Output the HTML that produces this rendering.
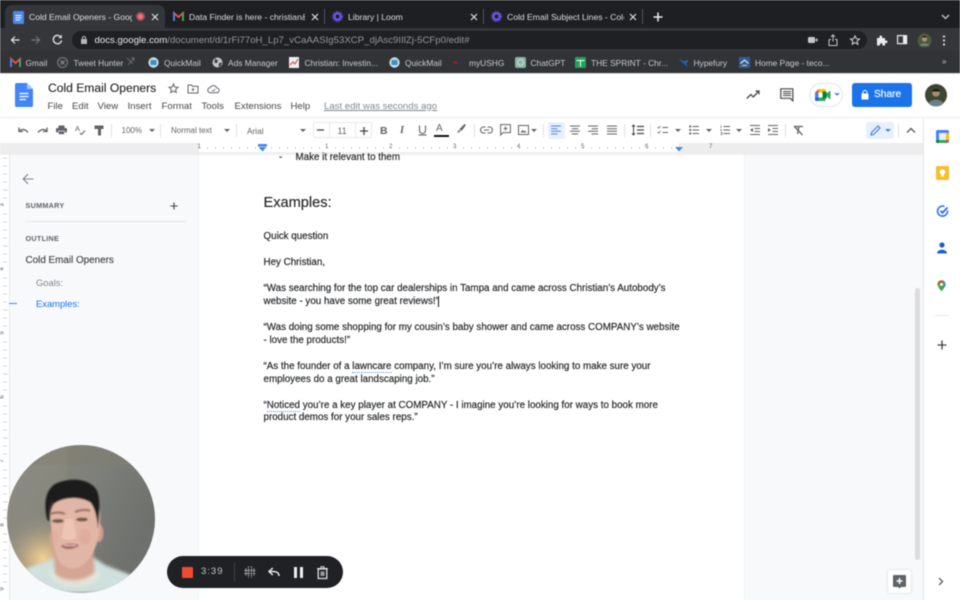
<!DOCTYPE html>
<html><head><meta charset="utf-8"><style>
html,body{margin:0;padding:0;background:#f8f9fa}
#r{position:relative;width:960px;height:600px;overflow:hidden;background:#f8f9fa;font-family:"Liberation Sans",sans-serif;filter:blur(.4px)}
#r div,#r span.t{position:absolute}
.t{white-space:nowrap;line-height:14px;height:14px;position:absolute}
svg{position:absolute;overflow:visible}
.tab{color:#dcdde0;font-size:8.6px}
.bm{color:#c9cacc;font-size:8.4px;top:55.5px}
.mn{color:#444746;font-size:9.6px;top:99.5px}
.tb{color:#5f6368;font-size:8px;top:123.5px}
.d{color:#1c1e21;font-size:9.8px;left:263.5px;-webkit-text-stroke:.15px #1c1e21}
.rn{color:#666;font-size:6px;top:141px;line-height:12px;height:12px}
.v{color:#555;font-size:6px;left:1px;line-height:8px;height:8px;transform:rotate(-90deg)}
</style></head><body><div id="r">

<div style="left:0;top:0;width:960px;height:28px;background:#1e1f22"></div>
<div style="left:5px;top:5px;width:160px;height:23px;background:#35363a;border-radius:7px 7px 0 0"></div>
<div style="left:0;top:28px;width:960px;height:23px;background:#35363a"></div>
<div style="left:0;top:51px;width:960px;height:22px;background:#323337"></div>
<div style="left:0;top:73px;width:960px;height:1px;background:#ddd"></div>

<svg style="left:13px;top:11px" width="12" height="13"><rect width="11" height="13" rx="1.5" fill="#4f86ec"/><path d="M2.5 4.5h6M2.5 6.8h6M2.5 9h4.5" stroke="#fff" stroke-width="1"/></svg>
<span class="t tab" style="left:29px;top:9.5px;width:103px;overflow:hidden">Cold Email Openers - Goog</span>
<svg style="left:135px;top:11px" width="12" height="12"><circle cx="5.500" cy="5.500" r="4.500" fill="#e8656a" opacity=".6"/><circle cx="5.500" cy="5.500" r="2.600" fill="#ee7276"/></svg>
<svg style="left:151px;top:13px" width="9" height="9"><path d="M1 1l6 6M7 1l-6 6" stroke="#dfe0e2" stroke-width="1.200"/></svg>

<svg style="left:173px;top:12px" width="11" height="9"><path d="M1 9V1l4.500 4L10 1v8" fill="none" stroke="#e8544a" stroke-width="1.800"/><path d="M1 9V1" stroke="#4a86e8" stroke-width="1.800"/><path d="M10 9V1" stroke="#3fa85f" stroke-width="1.800"/></svg>
<span class="t tab" style="left:189px;top:9.5px;width:116px;overflow:hidden">Data Finder is here - christian&amp;</span>
<svg style="left:311px;top:13px" width="9" height="9"><path d="M1 1l6 6M7 1l-6 6" stroke="#dfe0e2" stroke-width="1.200"/></svg>
<div style="left:324px;top:9px;width:1px;height:15px;background:#55565a"></div>

<svg style="left:332px;top:11px" width="12" height="12"><circle cx="5.500" cy="5.500" r="3.200" fill="none" stroke="#6a55e8" stroke-width="2.400"/><circle cx="5.500" cy="5.500" r="5" fill="none" stroke="#5a45d8" stroke-width="1.200" stroke-dasharray="1.500 1.200"/></svg>
<span class="t tab" style="left:348px;top:9.5px">Library | Loom</span>
<svg style="left:470px;top:13px" width="9" height="9"><path d="M1 1l6 6M7 1l-6 6" stroke="#dfe0e2" stroke-width="1.200"/></svg>
<div style="left:483px;top:9px;width:1px;height:15px;background:#55565a"></div>

<svg style="left:491px;top:11px" width="12" height="12"><circle cx="5.500" cy="5.500" r="3.200" fill="none" stroke="#6a55e8" stroke-width="2.400"/><circle cx="5.500" cy="5.500" r="5" fill="none" stroke="#5a45d8" stroke-width="1.200" stroke-dasharray="1.500 1.200"/></svg>
<span class="t tab" style="left:507px;top:9.5px;width:117px;overflow:hidden">Cold Email Subject Lines - Cole</span>
<svg style="left:629px;top:13px" width="9" height="9"><path d="M1 1l6 6M7 1l-6 6" stroke="#dfe0e2" stroke-width="1.200"/></svg>
<div style="left:642px;top:9px;width:1px;height:15px;background:#55565a"></div>
<svg style="left:653px;top:12px" width="10" height="10"><path d="M5 .5v9M.5 5h9" stroke="#eee" stroke-width="1.500"/></svg>
<svg style="left:941px;top:14px" width="9" height="6"><path d="M1 1l3.500 3.500L8 1" fill="none" stroke="#c8c9cb" stroke-width="1.300"/></svg>

<svg style="left:10px;top:35px" width="10" height="10"><path d="M9.500 5H1.500M5 1.500L1.500 5 5 8.500" fill="none" stroke="#e4e5e7" stroke-width="1.200"/></svg>
<svg style="left:31px;top:35px" width="10" height="10"><path d="M.5 5h8M5 1.500L8.500 5 5 8.500" fill="none" stroke="#77787b" stroke-width="1.200"/></svg>
<svg style="left:52px;top:34px" width="11" height="11"><path d="M9 3.200A4.200 4.200 0 1 0 9.600 6.500" fill="none" stroke="#e4e5e7" stroke-width="1.300"/><path d="M9.800 .8v3.400H6.400z" fill="#e4e5e7"/></svg>
<div style="left:72px;top:31px;width:795px;height:18px;border-radius:9px;background:#1f2023"></div>
<svg style="left:81px;top:36px" width="7" height="8"><rect x="0" y="3" width="6" height="5" rx=".5" fill="#b5b6b8"/><path d="M1.500 3.500V2a1.500 1.500 0 0 1 3 0v1.500" fill="none" stroke="#b5b6b8"/></svg>
<span class="t" style="left:94.500px;top:33.500px;font-size:9.650px;color:#e8e9eb">docs.google.com<span style="color:#96979a">/document/d/1rFi77oH_Lp7_vCaAASIg53XCP_djAsc9IIlZj-5CFp0/edit#</span></span>
<svg style="left:808px;top:36px" width="10" height="8"><rect y="1" width="7" height="6" rx="1" fill="#c5c6c8"/><path d="M7 4l2.500-2v4z" fill="#c5c6c8"/></svg>
<svg style="left:828px;top:34px" width="10" height="12"><path d="M1 5.500h2M7 5.500h2v6H1v-6" fill="none" stroke="#c5c6c8"/><path d="M5 7.500V1M3 2.800L5 .8l2 2" fill="none" stroke="#c5c6c8"/></svg>
<svg style="left:850px;top:35px" width="10" height="10"><path d="M5 .8l1.300 2.900 3.200.3-2.400 2.100.7 3.100L5 7.600 2.200 9.200l.7-3.100L.5 4l3.200-.3z" fill="none" stroke="#d5d6d8"/></svg>
<svg style="left:876px;top:35px" width="11" height="11"><path d="M1 3h2.500V1.800a1.300 1.300 0 0 1 2.600 0V3H9v2.500h1.200a1.300 1.300 0 0 1 0 2.600H9V10.500H6.500V9.500a1.300 1.300 0 0 0-2.600 0v1H1z" fill="#ececee"/></svg>
<svg style="left:897px;top:35px" width="11" height="10"><rect x=".6" y=".6" width="9" height="8" fill="none" stroke="#ececee" stroke-width="1.200"/><rect x="6" y="1" width="3.500" height="7.500" fill="#ececee"/></svg>
<svg style="left:917px;top:33px" width="15" height="15"><circle cx="7.500" cy="7.500" r="7" fill="#4f5a3c"/><circle cx="7.500" cy="6" r="2.600" fill="#b08f72"/><path d="M2.500 13c1-3.500 9-3.500 10 0z" fill="#6f7f88"/><path d="M5 4.500c1-2 4-2 5 0z" fill="#241c15"/></svg>
<svg style="left:942px;top:35px" width="4" height="11"><circle cx="2" cy="1.500" r="1.100" fill="#dedfe1"/><circle cx="2" cy="5.500" r="1.100" fill="#dedfe1"/><circle cx="2" cy="9.500" r="1.100" fill="#dedfe1"/></svg>

<svg style="left:10px;top:58px" width="11" height="9"><path d="M1 9V1l4.500 4L10 1v8" fill="none" stroke="#e8544a" stroke-width="1.800"/><path d="M1 9V1" stroke="#4a86e8" stroke-width="1.800"/><path d="M10 9V1" stroke="#3fa85f" stroke-width="1.800"/></svg>
<span class="t bm" style="left:25.500px">Gmail</span>
<svg style="left:57px;top:57px" width="11" height="11"><circle cx="5.500" cy="5.500" r="5" fill="#3a3b3f" stroke="#8a8b8e" stroke-width=".8"/><path d="M3.500 3.500l4 4M7.500 3.500l-4 4" stroke="#a5a6a8" stroke-width=".8"/></svg>
<span class="t bm" style="left:73.500px">Tweet Hunter</span>
<svg style="left:126px;top:57px" width="9" height="9"><path d="M1 1l6 6M8 1L2 8M5 1h3v3" fill="none" stroke="#77787a" stroke-width=".8"/></svg>
<svg style="left:148px;top:57px" width="11" height="11"><circle cx="5.500" cy="5.500" r="5.200" fill="#c5dbe8"/><rect x="2.500" y="3" width="6" height="5" rx=".7" fill="#3f8ec3"/></svg>
<span class="t bm" style="left:164px">QuickMail</span>
<svg style="left:212px;top:57px" width="11" height="11"><circle cx="5.500" cy="5.500" r="5" fill="#c4c5c8"/><path d="M3 1.500l3 2-1 2.500-2.500 0zM7 6l3-.5-1.500 3.500-2 1z" fill="#3a3b40"/></svg>
<span class="t bm" style="left:228px">Ads Manager</span>
<svg style="left:289px;top:57px" width="10" height="11"><rect width="10" height="11" fill="#eee"/><path d="M1 8l3-3 2 2 3-5" fill="none" stroke="#c4473f" stroke-width="1"/></svg>
<span class="t bm" style="left:304.500px">Christian: Investin...</span>
<svg style="left:389px;top:57px" width="11" height="11"><circle cx="5.500" cy="5.500" r="5.200" fill="#c5dbe8"/><rect x="2.500" y="3" width="6" height="5" rx=".7" fill="#3f8ec3"/></svg>
<span class="t bm" style="left:405px">QuickMail</span>
<div style="left:453px;top:61px;width:5px;height:3px;background:#8a1f2c;border-radius:2px"></div>
<div style="left:459px;top:62px;width:3px;height:2px;background:#27337a"></div>
<span class="t bm" style="left:469px">myUSHG</span>
<svg style="left:515px;top:57px" width="11" height="11"><rect width="11" height="11" rx="2" fill="#8ab5a5"/><circle cx="5.500" cy="5.500" r="3" fill="none" stroke="#c9ded5"/></svg>
<span class="t bm" style="left:530.500px">ChatGPT</span>
<svg style="left:575px;top:57px" width="11" height="11"><rect width="11" height="11" rx="1" fill="#21a35b"/><path d="M1.500 3.500h8M5.500 3.500v6" stroke="#fff" stroke-width="1"/></svg>
<span class="t bm" style="left:591px">THE SPRINT - Chr...</span>
<svg style="left:678px;top:58px" width="11" height="10"><path d="M.5 1l7 2.500L10 9 6 6z" fill="#1e5fae"/><path d="M7 3l3-1-1 3z" fill="#2b77cf"/></svg>
<span class="t bm" style="left:693.500px">Hypefury</span>
<svg style="left:739px;top:57px" width="11" height="11"><rect width="11" height="11" fill="#2e5c9c"/><path d="M1.500 6.500l4-3.500 4 3.500" fill="none" stroke="#dcebd0" stroke-width="1.200"/><path d="M3 8.500h5" stroke="#e8c25a" stroke-width="1.200"/></svg>
<span class="t bm" style="left:755px">Home Page - teco...</span>
<span class="t" style="left:942px;top:55px;font-size:8px;color:#c5c6c8">»</span>

<div style="left:0;top:74px;width:960px;height:44px;background:#fff"></div>
<svg style="left:15px;top:83px" width="18" height="24"><path d="M2 0h10l6 6v16.500a1.500 1.500 0 0 1-1.500 1.500H1.500A1.500 1.500 0 0 1 0 22.500V2a2 2 0 0 1 2-2z" fill="#4285f4"/><path d="M12 0l6 6h-6z" fill="#a1c2fa"/><path d="M4.500 10.500h9M4.500 13.500h9M4.500 16.500h6.500" stroke="#fff" stroke-width="1.300"/></svg>
<span class="t" style="left:48px;top:80px;font-size:12.100px;color:#202124;line-height:16px;height:16px;-webkit-text-stroke:.1px #202124">Cold Email Openers</span>
<svg style="left:168px;top:83px" width="11" height="11"><path d="M5.500 1l1.300 3 3.200.3-2.400 2.100.7 3.100-2.800-1.600-2.800 1.600.7-3.100L1 4.300 4.200 4z" fill="none" stroke="#5f6368"/></svg>
<svg style="left:187px;top:84px" width="12" height="10"><path d="M1 1h3.500l1 1.200H11V9H1z" fill="none" stroke="#5f6368"/><path d="M6 3.800v3.400M4.300 5.500h3.400" stroke="#5f6368" stroke-width=".8"/></svg>
<svg style="left:207px;top:84px" width="13" height="10"><path d="M3.500 8.800a2.600 2.600 0 0 1-.3-5.200 3.500 3.500 0 0 1 6.500.4 2.400 2.400 0 0 1 0 4.800z" fill="none" stroke="#5f6368"/><path d="M5 6l1.300 1.200L8.300 5" fill="none" stroke="#5f6368" stroke-width=".8"/></svg>
<span class="t mn" style="left:47.500px">File</span>
<span class="t mn" style="left:72px">Edit</span>
<span class="t mn" style="left:97.500px">View</span>
<span class="t mn" style="left:127.500px">Insert</span>
<span class="t mn" style="left:161.500px">Format</span>
<span class="t mn" style="left:201.500px">Tools</span>
<span class="t mn" style="left:234.500px">Extensions</span>
<span class="t mn" style="left:290.500px">Help</span>
<span class="t mn" style="left:324px;color:#80868b;text-decoration:underline">Last edit was seconds ago</span>

<svg style="left:746px;top:90px" width="14" height="10"><path d="M.8 8.500l4-4 2.500 2.500L12.500 1.500" fill="none" stroke="#444746" stroke-width="1.300"/><path d="M9.500 1H13v3.500" fill="none" stroke="#444746" stroke-width="1.200"/></svg>
<svg style="left:780px;top:88px" width="14" height="14"><path d="M.8.800h12v12l-2.500-2.500H.8z" fill="none" stroke="#444746" stroke-width="1.200"/><path d="M3 3.500h8M3 5.500h8M3 7.500h8" stroke="#444746" stroke-width=".9"/></svg>
<div style="left:809px;top:83px;width:34px;height:24px;border:1px solid #e3e4e6;border-radius:12px;background:#fff;box-sizing:border-box"></div>
<svg style="left:815px;top:89px" width="17" height="12"><path d="M3.500 0h7v3.500H3.500z" fill="#fbbc04"/><path d="M3.500 0v3.500H0z" fill="#ea4335"/><path d="M0 3.500h3.500v5H0z" fill="#4285f4"/><path d="M0 8.500h3.500V12H1a1 1 0 0 1-1-1z" fill="#1967d2"/><path d="M3.500 8.500h7V12h-7z" fill="#34a853"/><rect x="7.500" y="2.500" width="4" height="7" fill="#00832d"/><path d="M11.500 4.500L15.500 1.500v9l-4-3z" fill="#34a853"/></svg>
<svg style="left:834px;top:93px" width="6" height="4"><path d="M0 0h6L3 3z" fill="#5f8fd8"/></svg>
<div style="left:852px;top:83px;width:60px;height:24px;background:#1a73e8;border-radius:3px"></div>
<svg style="left:861px;top:90px" width="8" height="10"><rect x=".5" y="3.500" width="7" height="6" rx=".8" fill="#fff"/><path d="M2 4V2.500a2 2 0 0 1 4 0V4" fill="none" stroke="#fff"/></svg>
<span class="t" style="left:874px;top:88px;font-size:10.200px;color:#fff;-webkit-text-stroke:.15px #fff">Share</span>
<svg style="left:925px;top:84px" width="22" height="22"><circle cx="11" cy="11" r="11" fill="#3d4630"/><circle cx="11" cy="9" r="3.800" fill="#a68a6e"/><path d="M3.500 19.500C5 14.500 17 14.500 18.500 19.500A11 11 0 0 1 3.500 19.500z" fill="#6d7f8a"/><path d="M7 7.500c1-3.300 7-3.300 8 0z" fill="#1f1810"/></svg>

<div style="left:0;top:118px;width:923px;height:25px;background:#fff"></div>
<div style="left:0;top:116.500px;width:960px;height:1.500px;background:#eceded"></div>
<svg style="left:18px;top:126px" width="11" height="8"><path d="M1 1.500v4h4" fill="none" stroke="#5f6368" stroke-width="1.300"/><path d="M1.300 5.200C3.500 2.800 7 2.800 10 6.500" fill="none" stroke="#5f6368" stroke-width="1.300"/></svg>
<svg style="left:37px;top:126px" width="11" height="8"><path d="M10 1.500v4H6" fill="none" stroke="#5f6368" stroke-width="1.300"/><path d="M9.700 5.200C7.500 2.800 4 2.800 1 6.500" fill="none" stroke="#5f6368" stroke-width="1.300"/></svg>
<svg style="left:56px;top:125px" width="11" height="10"><rect x="2.500" y=".5" width="6" height="2.500" fill="#5f6368"/><rect y="3" width="11" height="4.500" rx="1" fill="#5f6368"/><rect x="2.500" y="6" width="6" height="3.500" fill="#5f6368" stroke="#fff" stroke-width=".6"/></svg>
<svg style="left:75px;top:124px" width="11" height="12"><text x="0" y="7" font-size="7.500" fill="#5f6368" font-family="Liberation Sans">A</text><path d="M5 9l1.500 1.500L10 6.500" fill="none" stroke="#5f6368"/></svg>
<svg style="left:94px;top:125px" width="11" height="11"><path d="M.5.500h9v3.500h-9z" fill="#5f6368"/><path d="M4 4h3v6.500H4z" fill="#5f6368"/></svg>
<div style="left:111px;top:124px;width:1px;height:13px;background:#e0e1e3"></div>
<span class="t tb" style="left:121.500px">100%</span>
<svg style="left:149px;top:128.500px" width="6" height="4"><path d="M0 0h6L3 3z" fill="#5f6368"/></svg>
<div style="left:160px;top:124px;width:1px;height:13px;background:#e0e1e3"></div>
<span class="t tb" style="left:171px">Normal text</span>
<svg style="left:224px;top:128.500px" width="6" height="4"><path d="M0 0h6L3 3z" fill="#5f6368"/></svg>
<div style="left:236px;top:124px;width:1px;height:13px;background:#e0e1e3"></div>
<span class="t tb" style="left:247px;font-size:8.300px">Arial</span>
<svg style="left:300px;top:128.500px" width="6" height="4"><path d="M0 0h6L3 3z" fill="#5f6368"/></svg>
<div style="left:312.500px;top:122px;width:59px;height:16px;border:1px solid #e8e9eb;border-radius:2px;box-sizing:border-box"></div>
<div style="left:329px;top:122px;width:1px;height:16px;background:#e8e9eb"></div>
<div style="left:355px;top:122px;width:1px;height:16px;background:#e8e9eb"></div>
<svg style="left:317px;top:129px" width="7" height="2"><path d="M0 1h7" stroke="#444" stroke-width="1.300"/></svg>
<span class="t tb" style="left:337.500px;font-size:8.800px">11</span>
<svg style="left:360px;top:126.500px" width="8" height="8"><path d="M4 0v8M0 4h8" stroke="#444" stroke-width="1.300"/></svg>
<span class="t" style="left:380px;top:124px;font-size:10.500px;font-weight:700;color:#5f6368">B</span>
<span class="t" style="left:400px;top:124px;font-size:10.500px;font-style:italic;font-family:'Liberation Serif',serif;font-weight:700;color:#5f6368">I</span>
<svg style="left:418px;top:125px" width="9" height="11"><path d="M1.500.5v5a3 3 0 0 0 6 0v-5" fill="none" stroke="#5f6368" stroke-width="1.100"/><path d="M.5 10h8" stroke="#5f6368" stroke-width="1.100"/></svg>
<span class="t" style="left:436px;top:122px;font-size:10px;color:#5f6368">A</span>
<div style="left:434px;top:135px;width:14.500px;height:2px;background:#111"></div>
<svg style="left:456px;top:124px" width="11" height="11"><path d="M10 1L8.500 0 3.500 5l2 2zM3 5.500L1 9l3.500-1.500z" fill="#5f6368"/></svg>
<div style="left:474px;top:124px;width:1px;height:13px;background:#e0e1e3"></div>

<svg style="left:480px;top:126px" width="13" height="8"><path d="M5.500 1H3.500a3 3 0 0 0 0 6h2M7.500 1h2a3 3 0 0 1 0 6h-2M4 4h5" fill="none" stroke="#5f6368" stroke-width="1.100"/></svg>
<svg style="left:500px;top:124px" width="11" height="12"><path d="M.6.600h9.800v8H3l-2.400 2.400z" fill="none" stroke="#5f6368"/><path d="M5.500 2.500v4M3.500 4.500h4" stroke="#5f6368"/></svg>
<svg style="left:518px;top:125px" width="11" height="10"><rect x=".5" y=".5" width="10" height="9" fill="none" stroke="#5f6368"/><path d="M2.500 7.500l2-2.500 1.500 1.500 1-1 1.500 2z" fill="#5f6368"/></svg>
<svg style="left:531px;top:128.500px" width="6" height="4"><path d="M0 0h6L3 3z" fill="#5f6368"/></svg>
<div style="left:543px;top:124px;width:1px;height:13px;background:#e0e1e3"></div>
<div style="left:547.500px;top:121.500px;width:17px;height:17px;background:#e8f0fe;border-radius:2px"></div>
<svg style="left:551px;top:125px" width="10" height="10"><path d="M0 1h10M0 3.700h6.500M0 6.300h10M0 9h6.500" stroke="#4a85d8" stroke-width="1"/></svg>
<svg style="left:570px;top:125px" width="10" height="10"><path d="M0 1h10M1.800 3.700h6.400M0 6.300h10M1.800 9h6.400" stroke="#5f6368" stroke-width="1"/></svg>
<svg style="left:588px;top:125px" width="10" height="10"><path d="M0 1h10M3.500 3.700h6.500M0 6.300h10M3.500 9h6.500" stroke="#5f6368" stroke-width="1"/></svg>
<svg style="left:607px;top:125px" width="10" height="10"><path d="M0 1h10M0 3.700h10M0 6.300h10M0 9h10" stroke="#5f6368" stroke-width="1"/></svg>
<div style="left:624px;top:124px;width:1px;height:13px;background:#e0e1e3"></div>
<svg style="left:631px;top:124px" width="13" height="12"><path d="M2.500 1v10M1 2.700L2.500 1 4 2.700M1 9.300L2.500 11 4 9.300" fill="none" stroke="#444746"/><path d="M6 2.500h7M6 6h7M6 9.500h7" stroke="#444746" stroke-width="1.200"/></svg>
<div style="left:650px;top:124px;width:1px;height:13px;background:#e0e1e3"></div>
<svg style="left:657px;top:125px" width="11" height="10"><path d="M.5 2l1.200 1.200L3.500 1M.5 7l1.200 1.200L3.500 6" fill="none" stroke="#5f6368" stroke-width=".8"/><path d="M5.500 2.500H11M5.500 7.500H11" stroke="#5f6368"/></svg>
<svg style="left:675px;top:128.500px" width="6" height="4"><path d="M0 0h6L3 3z" fill="#5f6368"/></svg>
<svg style="left:689px;top:125px" width="10" height="10"><circle cx="1.200" cy="1.500" r="1.100" fill="#5f6368"/><circle cx="1.200" cy="5" r="1.100" fill="#5f6368"/><circle cx="1.200" cy="8.500" r="1.100" fill="#5f6368"/><path d="M3.500 1.500H10M3.500 5H10M3.500 8.500H10" stroke="#5f6368"/></svg>
<svg style="left:706px;top:128.500px" width="6" height="4"><path d="M0 0h6L3 3z" fill="#5f6368"/></svg>
<svg style="left:719.500px;top:125px" width="10" height="10"><path d="M1 .5v2.500M1 4v1.500h1M.5 7.500H2v2H.5" fill="none" stroke="#5f6368" stroke-width=".7"/><path d="M3.500 1.500H10M3.500 5H10M3.500 8.500H10" stroke="#5f6368"/></svg>
<svg style="left:736px;top:128.500px" width="6" height="4"><path d="M0 0h6L3 3z" fill="#5f6368"/></svg>
<svg style="left:750px;top:125px" width="10" height="10"><path d="M0 .5h10M4.500 3.500H10M4.500 6.500H10M0 9.500h10" stroke="#5f6368"/><path d="M3 3v4L0 5z" fill="#5f6368"/></svg>
<svg style="left:768px;top:125px" width="10" height="10"><path d="M0 .5h10M4.500 3.500H10M4.500 6.500H10M0 9.500h10" stroke="#5f6368"/><path d="M0 3v4l3-2z" fill="#5f6368"/></svg>
<div style="left:785px;top:124px;width:1px;height:13px;background:#e0e1e3"></div>
<svg style="left:793px;top:125px" width="11" height="11"><path d="M1.500 1.500h8.500M6 1.500L4.500 9M1 1l8.500 9" fill="none" stroke="#5f6368" stroke-width="1.300"/></svg>
<div style="left:866px;top:122px;width:28px;height:17px;background:#e8f0fe;border-radius:3px"></div>
<svg style="left:870px;top:125px" width="11" height="11"><path d="M1 10l.5-2.500L8 1l2 2-6.500 6.500z" fill="none" stroke="#4a85d8" stroke-width="1.200"/></svg>
<svg style="left:885px;top:129px" width="6" height="4"><path d="M0 0h6L3 3z" fill="#4a85d8"/></svg>
<div style="left:898px;top:124px;width:1px;height:13px;background:#e0e1e3"></div>
<svg style="left:906px;top:127px" width="10" height="7"><path d="M1 5.500L5 1.500l4 4" fill="none" stroke="#5f6368" stroke-width="1.500"/></svg>

<div style="left:0;top:143px;width:923px;height:10px;background:#ededee"></div>
<div style="left:199px;top:143px;width:480px;height:10px;background:#fff"></div>
<svg style="left:199px;top:146px" width="480" height="4"><path d="M0 2H480" stroke="#a8aaad" stroke-width="1" stroke-dasharray="1 7"/></svg>
<span class="t rn" style="left:197.500px">1</span>
<span class="t rn" style="left:325px">1</span>
<span class="t rn" style="left:389px">2</span>
<span class="t rn" style="left:453px">3</span>
<span class="t rn" style="left:517px">4</span>
<span class="t rn" style="left:581px">5</span>
<span class="t rn" style="left:645px">6</span>
<span class="t rn" style="left:709px">7</span>
<svg style="left:258px;top:144px" width="10" height="8"><rect width="9" height="2.500" fill="#4a85e0"/><path d="M.5 3h8L4.500 7.500z" fill="#4a85e0"/></svg>
<svg style="left:675px;top:147px" width="8" height="5"><path d="M0 0h8L4 4.500z" fill="#4a85e0"/></svg>

<div style="left:0;top:153px;width:9px;height:447px;background:#fff;border-right:1px solid #e6e7e8"></div>
<svg style="left:2px;top:156px" width="6" height="444"><path d="M1 2H5M1 10H5M1 18H5M1 26H5M1 34H6M1 42H5M1 58H5M1 66H5M1 74H5M1 82H5M1 90H6M1 98H5M1 106H5M1 122H5M1 130H5M1 138H5M1 146H5M1 154H6M1 162H5M1 170H5M1 186H5M1 194H5M1 202H5M1 210H5M1 218H6M1 226H5M1 234H5M1 250H5M1 258H5M1 266H5M1 274H5M1 282H6M1 290H5M1 298H5M1 314H5M1 322H5M1 330H5M1 338H5M1 346H6M1 354H5M1 362H5M1 378H5M1 386H5M1 394H5M1 402H5M1 410H6M1 418H5M1 426H5" stroke="#c5c6c8" stroke-width=".7"/></svg>
<span class="t v" style="top:201px">3</span>
<span class="t v" style="top:265px">4</span>
<span class="t v" style="top:329px">5</span>
<span class="t v" style="top:393px">6</span>
<span class="t v" style="top:457px">7</span>
<span class="t v" style="top:521px">8</span>
<span class="t v" style="top:585px">9</span>
<div style="left:9px;top:302.500px;width:8px;height:1.500px;background:#4a85d8"></div>

<svg style="left:22px;top:173px" width="12" height="12"><path d="M11.500 6H1.500M6 1.200L1.200 6 6 10.800" fill="none" stroke="#80868b" stroke-width="1.100"/></svg>
<span class="t" style="left:25.500px;top:198.500px;font-size:7.200px;font-weight:700;letter-spacing:.3px;color:#5f6368">SUMMARY</span>
<svg style="left:170px;top:201.500px" width="8" height="8"><path d="M4 .5v7M.5 4h7" stroke="#444746" stroke-width="1.100"/></svg>
<div style="left:25px;top:221px;width:161px;height:1px;background:#e6e7e9"></div>
<span class="t" style="left:25.500px;top:231.500px;font-size:7.200px;font-weight:700;letter-spacing:.3px;color:#5f6368">OUTLINE</span>
<span class="t" style="left:25.500px;top:254px;font-size:9.900px;color:#3c4043;-webkit-text-stroke:.12px #3c4043">Cold Email Openers</span>
<span class="t" style="left:36px;top:275.500px;font-size:9.400px;color:#80868b">Goals:</span>
<span class="t" style="left:36px;top:296.500px;font-size:9.400px;color:#1a73e8">Examples:</span>

<div style="left:199px;top:153px;width:545px;height:447px;background:#fff;box-shadow:0 0 1px #d5d6d8"></div>
<div style="left:0;top:152px;width:923px;height:2.500px;background:#e9eaeb;opacity:.7"></div>

<span class="t d" style="left:279px;top:151px">-</span>
<span class="t d" style="left:295.500px;top:151px">Make it relevant to them</span>
<span class="t" style="left:263.500px;top:193.500px;font-size:14.600px;color:#202124;line-height:18px;height:18px;-webkit-text-stroke:.12px #202124">Examples:</span>
<span class="t d" style="top:230px">Quick question</span>
<span class="t d" style="top:255.500px">Hey Christian,</span>
<span class="t d" style="top:281.500px">“Was searching for the top car dealerships in Tampa and came across Christian’s Autobody’s</span>
<span class="t d" style="top:294.500px">website - you have some great reviews!”</span>
<div style="left:438px;top:296px;width:1px;height:11px;background:#111"></div>
<span class="t d" style="top:320.500px">“Was doing some shopping for my cousin’s baby shower and came across COMPANY’s website</span>
<span class="t d" style="top:333.500px">- love the products!”</span>
<span class="t d" style="top:359.500px">“As the founder of a <span style="border-bottom:1px dotted #5b8fe0">lawncare</span> company, I’m sure you’re always looking to make sure your</span>
<span class="t d" style="top:372.500px">employees do a great landscaping job.”</span>
<span class="t d" style="top:398.500px">“<span style="border-bottom:1px dotted #5b8fe0">Noticed</span> you’re a key player at COMPANY - I imagine you’re looking for ways to book more</span>
<span class="t d" style="top:411px">product demos for your sales reps.”</span>

<div style="left:923px;top:118px;width:37px;height:482px;background:#fff;border-left:1px solid #e4e5e7;box-sizing:border-box"></div>
<div style="left:915px;top:288px;width:5px;height:272px;background:#dcdcdd;border-radius:3px"></div>
<svg style="left:935.500px;top:129.500px" width="13" height="13"><rect width="13" height="13" rx="1.500" fill="#4285f4"/><rect x="3" y="3" width="7" height="7" fill="#e8effb"/><path d="M10 3h3v7h-3z" fill="#fbbc04"/><path d="M3 10h7v3H3z" fill="#34a853"/><path d="M0 10h3v3H1a1 1 0 0 1-1-1z" fill="#188038"/><path d="M10 10h3l-3 3z" fill="#ea4335"/></svg>
<svg style="left:935.500px;top:166px" width="13" height="14"><rect width="13" height="14" rx="1.500" fill="#f6bf26"/><circle cx="6.500" cy="6" r="2.800" fill="#fff"/><rect x="5" y="8.500" width="3" height="2" fill="#fff"/></svg>
<svg style="left:935.500px;top:204.500px" width="13" height="13"><path d="M11.500 5.500A5 5 0 1 1 8.500 1.500" fill="none" stroke="#3b7de6" stroke-width="1.700"/><path d="M4.500 5.800L6.500 7.800 11.500 2.500" fill="none" stroke="#2f6fd8" stroke-width="1.800"/></svg>
<svg style="left:937px;top:242px" width="10" height="12"><circle cx="5" cy="3" r="2.600" fill="#1a5fc8"/><path d="M0 11.500c0-5 10-5 10 0z" fill="#1a5fc8"/></svg>
<svg style="left:937px;top:280px" width="9" height="12"><path d="M4.500 11.500C2.500 8.500.3 6.700.3 4.400a4.200 4.200 0 0 1 8.400 0c0 2.300-2.200 4.100-4.200 7.100z" fill="#34a853"/><path d="M1 2.200L4.500 .2 7 1 4.500 4.400z" fill="#ea4335"/><path d="M7 1l1.700 3.400L6 6z" fill="#4285f4"/><circle cx="4.500" cy="4.400" r="1.500" fill="#fff"/><path d="M.3 4.400L2.500 6.500 1.500 7.500z" fill="#fbbc04"/></svg>
<div style="left:935px;top:314.500px;width:14px;height:1px;background:#e6e7e9"></div>
<svg style="left:937px;top:340px" width="10" height="10"><path d="M5 .5v9M.5 5h9" stroke="#3c4043" stroke-width="1.300"/></svg>
<svg style="left:938px;top:577px" width="6" height="9"><path d="M1 1l3.500 3.500L1 8" fill="none" stroke="#5f6368" stroke-width="1.400"/></svg>
<div style="left:888px;top:570px;width:23px;height:23px;background:#fff;box-shadow:0 0 2px #c9cacc;border-radius:2px"></div>
<svg style="left:893px;top:575px" width="13" height="14"><path d="M1 0h11a1 1 0 0 1 1 1v10a1 1 0 0 1-1 1H8l-1.500 1.500L5 12H1a1 1 0 0 1-1-1V1a1 1 0 0 1 1-1z" fill="#5f6368"/><path d="M6.500 3v6M3.500 6h6" stroke="#fff" stroke-width="1.500"/></svg>

<svg style="left:7px;top:445px" width="148" height="148" viewBox="0 0 148 148">
<defs>
<clipPath id="c"><circle cx="74" cy="74" r="74"/></clipPath>
<linearGradient id="bg" x1="0" y1="0" x2="1" y2=".5"><stop offset="0" stop-color="#8b8a80"/><stop offset=".55" stop-color="#7e807a"/><stop offset="1" stop-color="#6d706c"/></linearGradient>
<radialGradient id="gl" gradientUnits="userSpaceOnUse" cx="36" cy="114" r="46"><stop offset="0" stop-color="#f2d091"/><stop offset=".3" stop-color="#c8af86"/><stop offset="1" stop-color="#8f8d7f" stop-opacity="0"/></radialGradient>
<filter id="b" x="-20%" y="-20%" width="140%" height="140%"><feGaussianBlur stdDeviation="1.500"/></filter>
<filter id="b2" x="-20%" y="-20%" width="140%" height="140%"><feGaussianBlur stdDeviation=".8"/></filter>
</defs>
<g clip-path="url(#c)">
<rect width="148" height="148" fill="url(#bg)"/>
<rect width="148" height="20" fill="#807e72" opacity=".6"/>
<rect y="0" width="60" height="148" fill="#a39b88" opacity=".18"/>
<circle cx="36" cy="114" r="46" fill="url(#gl)"/>
<g filter="url(#b)">
<path d="M18 124L40 116 48 112 86 112 98 120 124 130 124 148H28z" fill="#cfe0de"/>
<path d="M46 104h40l2 26c-10 14-32 12-40 0z" fill="#d3a592"/>
<path d="M44 122c4 16 36 18 46 2l4 6c-6 14-42 18-52-1z" fill="#e3e5da" opacity=".9"/>
</g>
<g filter="url(#b2)">
<ellipse cx="92" cy="88" rx="4.500" ry="9" fill="#cf9f8f"/>
<path d="M43 64C43 50 58 46 70 47 84 47 93 55 93 70 94 92 88 110 76 120 68 126 57 124 52 116 46 106 44 85 43 64z" fill="#e2b6a6"/>
<path d="M40 74C37 62 37 44 50 38 65 32 82 34 89 44 93 50 93 62 91 84 90 72 88 62 83 57 72 51 57 52 48 58 44 61 43 70 42 77z" fill="#1f1c1b"/>
<path d="M42 74c0-6 1-14 4-17" stroke="#3a3230" stroke-width="2" fill="none"/>
<path d="M44 69c4-2 10-2 14 0M68 67c4-2 11-3 15-1" fill="none" stroke="#8a6657" stroke-width="2"/>
<ellipse cx="51" cy="76" rx="6" ry="1.900" fill="#6f5247"/>
<ellipse cx="75" cy="74.500" rx="6" ry="1.900" fill="#6f5247"/>
<path d="M58 74c-1 6-3 12-3 18 3 4 11 4 14 0 0-6-2-12-3-18z" fill="#f0c9ba" opacity=".75"/>
<ellipse cx="47" cy="93" rx="5" ry="8" fill="#e2aa9c" opacity=".5"/>
<ellipse cx="78" cy="92" rx="6" ry="8" fill="#dba394" opacity=".5"/>
<path d="M54 101c4-3 13-3 18-1-3 4-14 6-18 1z" fill="#a35a58"/>
<path d="M57 100.500h12" stroke="#ead7cf" stroke-width="1.200"/>
</g>
</g>
</svg>

<div style="left:167px;top:556px;width:176px;height:32px;background:#202124;border-radius:16px"></div>
<div style="left:182px;top:567px;width:11px;height:11px;background:#ef4b33;border-radius:1px"></div>
<span class="t" style="left:201px;top:565px;font-size:9.500px;letter-spacing:1px;color:#c5c6c8">3:39</span>
<div style="left:233.500px;top:562px;width:1px;height:20px;background:#3f4043"></div>
<svg style="left:244px;top:566px" width="12" height="12"><path d="M2 2.500v7M4.500 .5v11M7.500 .5v11M10 2.500v7M.5 4.500h11M.5 7.500h11" stroke="#dcdddf" stroke-width="1" stroke-dasharray="1.100 1"/></svg>
<svg style="left:268px;top:567px" width="12" height="10"><path d="M1 4.500h4.500C8.500 4.500 11 6 11 9" fill="none" stroke="#e8e9eb" stroke-width="1.500"/><path d="M4.800 1L1 4.500 4.800 8" fill="none" stroke="#e8e9eb" stroke-width="1.500"/></svg>
<div style="left:294px;top:567px;width:3px;height:11px;background:#f0f0f2;border-radius:.5px"></div>
<div style="left:299.500px;top:567px;width:3px;height:11px;background:#f0f0f2;border-radius:.5px"></div>
<svg style="left:317px;top:566px" width="11" height="13"><path d="M0 2.500h11M4 2.500V.7h3v1.800" fill="none" stroke="#dcdddf"/><path d="M1.200 3h8.600v9.500H1.200z" fill="none" stroke="#dcdddf" stroke-width="1.300"/><rect x="3.500" y="5.500" width="4" height="4.500" fill="#9a9b9d"/></svg>

</div></body></html>
